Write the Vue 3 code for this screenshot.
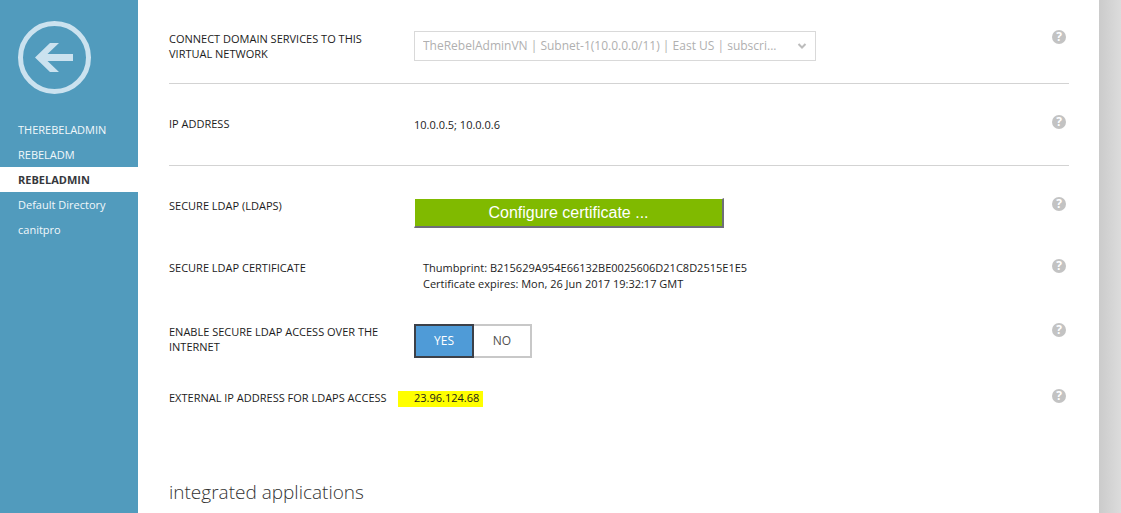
<script setup>
import { ref } from 'vue'

const directories = ['THEREBELADMIN', 'REBELADM', 'REBELADMIN', 'Default Directory', 'canitpro']
const current = 'REBELADMIN'
const access = ref('YES')
</script>

<template>
  <div class="shell">
    <aside class="sidebar">
      <button class="back" type="button" aria-label="Back">
        <svg viewBox="0 0 74 74" aria-hidden="true">
          <circle cx="37.500" cy="37.500" r="34" fill="none" stroke="currentColor" stroke-width="5" />
          <path d="M18 37.500 33 23h9L30.500 34H56v7H30.500L42 52h-9z" fill="currentColor" />
        </svg>
      </button>
      <nav>
        <a v-for="d in directories" :key="d" href="#" :class="{ active: d === current }">{{ d }}</a>
      </nav>
    </aside>

    <main class="content">
      <div class="row network ruled">
        <label class="name" for="network">CONNECT DOMAIN SERVICES TO THIS VIRTUAL NETWORK</label>
        <div class="value">
          <div class="picker">
            <select id="network" disabled>
              <option>TheRebelAdminVN | Subnet-1(10.0.0.0/11) | East US | subscri...</option>
            </select>
            <svg viewBox="0 0 10 6" aria-hidden="true">
              <path d="M1.500 1 5 4.500 8.500 1" fill="none" stroke="#bcbcbc" stroke-width="2" />
            </svg>
          </div>
        </div>
        <button class="help" type="button" aria-label="Help">?</button>
      </div>

      <div class="row ip ruled">
        <span class="name">IP ADDRESS</span>
        <div class="value text">10.0.0.5; 10.0.0.6</div>
        <button class="help" type="button" aria-label="Help">?</button>
      </div>

      <div class="row">
        <span class="name">SECURE LDAP (LDAPS)</span>
        <div class="value">
          <button class="configure" type="button">Configure certificate ...</button>
        </div>
        <button class="help" type="button" aria-label="Help">?</button>
      </div>

      <div class="row">
        <span class="name">SECURE LDAP CERTIFICATE</span>
        <div class="value text certificate">
          <div>Thumbprint: B215629A954E66132BE0025606D21C8D2515E1E5</div>
          <div>Certificate expires: Mon, 26 Jun 2017 19:32:17 GMT</div>
        </div>
        <button class="help" type="button" aria-label="Help">?</button>
      </div>

      <div class="row">
        <span id="access-name" class="name">ENABLE SECURE LDAP ACCESS OVER THE INTERNET</span>
        <div class="value toggle" role="group" aria-labelledby="access-name">
          <button
            v-for="o in ['YES', 'NO']"
            :key="o"
            type="button"
            :class="{ on: access === o }"
            :aria-pressed="access === o"
            @click="access = o"
          >{{ o }}</button>
        </div>
        <button class="help" type="button" aria-label="Help">?</button>
      </div>

      <div class="row">
        <span class="name">EXTERNAL IP ADDRESS FOR LDAPS ACCESS</span>
        <div class="value text"><mark>23.96.124.68</mark></div>
        <button class="help" type="button" aria-label="Help">?</button>
      </div>

      <h2>integrated applications</h2>
    </main>
    <div class="gutter"></div>
  </div>
</template>

<style>
body {
  margin: 0;
  overflow: hidden;
}
</style>

<style scoped>
.shell {
  display: flex;
  min-height: 100vh;
  font-family: "Open Sans", "Noto Sans", sans-serif;
  font-size: 12px;
  line-height: 16px;
  color: #1c1c1c;
  background: #fff;
}
button,
select {
  margin: 0;
  padding: 0;
  border: 0;
  font: inherit;
}
.sidebar {
  flex: 0 0 138px;
  background: #519bbd;
}
.back {
  display: block;
  width: 74px;
  height: 74px;
  margin: 20px 0 23px 17px;
  background: none;
  color: #cbe2ef;
}
.back svg {
  display: block;
}
nav a {
  display: block;
  padding-left: 18px;
  font-size: 11px;
  line-height: 25px;
  color: #f1f8fb;
  text-decoration: none;
}
nav a.active {
  background: #fff;
  color: #36383d;
  font-weight: 700;
}
.content {
  flex: 1;
  min-width: 0;
  padding: 0 30px 0 31px;
}
.row {
  display: flex;
  align-items: flex-start;
  box-sizing: border-box;
  min-height: 62px;
  padding: 31px 3px 0 0;
}
.network {
  min-height: 84px;
  padding-top: 30px;
}
.ip {
  min-height: 82px;
}
.ruled {
  border-bottom: 1px solid #d3d3d3;
}
.name {
  flex: 0 0 225px;
  margin-right: 20px;
  padding-top: 1px;
  font-size: 11px;
  line-height: 15px;
  font-weight: 500;
}
.value {
  flex: 1;
  min-width: 0;
  padding-top: 1px;
}
.text {
  padding-top: 2px;
  font-size: 11px;
}
.picker {
  display: flex;
  align-items: center;
  justify-content: space-between;
  box-sizing: border-box;
  max-width: 402px;
  height: 30px;
  padding-right: 8px;
  border: 1px solid #d9d9d9;
}
.picker select {
  flex: 1;
  min-width: 0;
  height: 28px;
  padding-left: 8px;
  appearance: none;
  background: none;
  color: #b0b0b0;
  opacity: 1;
}
.picker svg {
  width: 10px;
  height: 6px;
}
.help {
  flex: 0 0 14px;
  height: 14px;
  border-radius: 50%;
  background: #c3c3c3;
  color: #fff;
  font-size: 12px;
  line-height: 14px;
  font-weight: 700;
}
.configure {
  display: block;
  width: 100%;
  max-width: 310px;
  height: 30px;
  border: 1px solid #fff;
  border-right: 2px solid #6e6e78;
  border-bottom: 2px solid #6e6e78;
  background: #80ba00;
  color: #fff;
  font-family: "Liberation Sans", Arial, sans-serif;
  font-size: 16px;
}
.certificate {
  padding-top: 1px;
  padding-left: 9px;
}
.toggle {
  display: flex;
}
.toggle button {
  box-sizing: border-box;
  width: 58px;
  height: 34px;
  border: 2px solid #c8c8c8;
  border-left-width: 0;
  background: #fff;
  color: #505050;
  font-size: 12px;
}
.toggle button.on {
  width: 60px;
  border: 2px solid #3c4048;
  background: #4f9bd7;
  color: #fff;
}
mark {
  display: block;
  width: fit-content;
  margin-left: -16px;
  padding: 0 4px 2px 16px;
  line-height: 14px;
  background: #ff0;
  color: inherit;
}
h2 {
  margin: 59px 0 0;
  font-size: 19px;
  line-height: 26px;
  font-weight: 300;
  color: #333;
}
.gutter {
  flex: 0 0 22px;
  background: linear-gradient(90deg, #cbcbcb, #dcdcdc);
}
</style>
